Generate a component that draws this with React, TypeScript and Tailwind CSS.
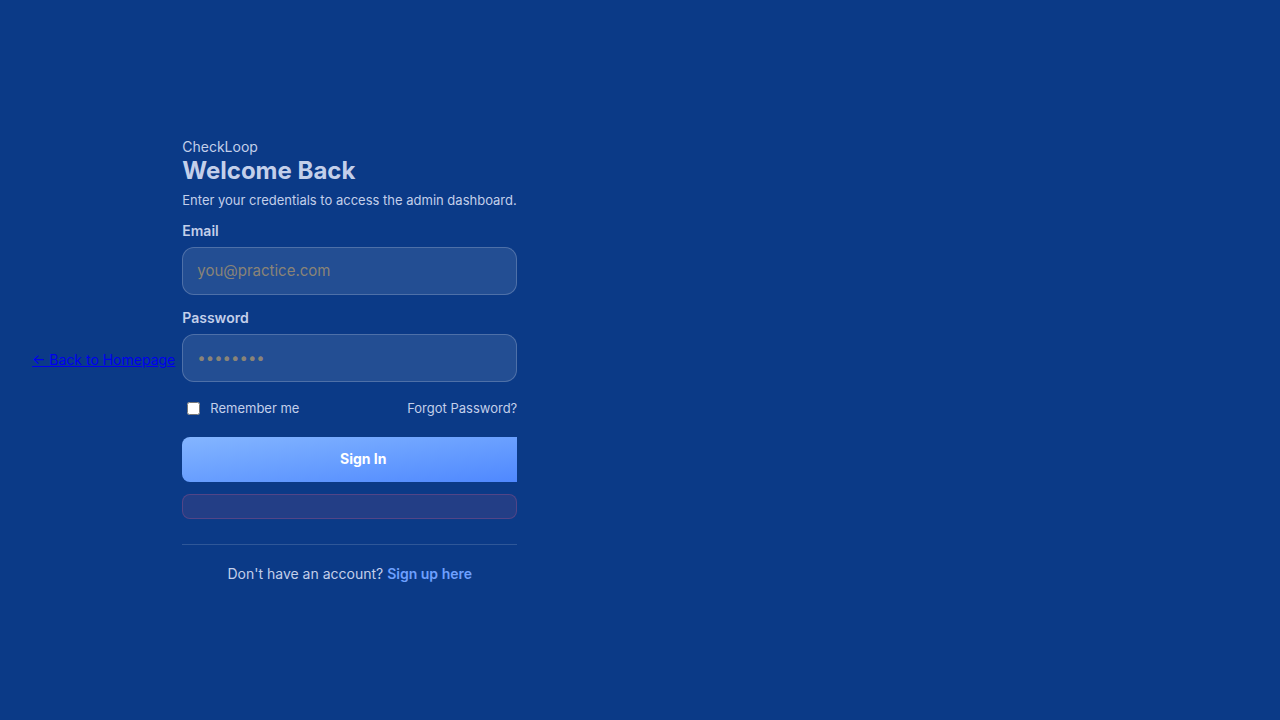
import React from "react";

const LoginPage = () => {
  return (
    <div
      className="min-h-screen w-full flex items-center gap-[7px] px-8 bg-[#0b3a87]"
      style={{ fontFamily: "Inter, 'Liberation Sans', sans-serif" }}
    >
      <a href="#" className="text-sm text-[#0000ee] underline">
        ← Back to Homepage
      </a>
      <div className="w-[335px] flex flex-col">
        <p className="text-sm text-[#c3cfea] leading-5">CheckLoop</p>
        <h1 className="text-2xl font-bold text-[#c3cfea] leading-7">Welcome Back</h1>
        <p className="text-[13px] leading-4 text-[#c3cfea] mt-[7px]">
          Enter your credentials to access the admin dashboard.
        </p>
        <form className="flex flex-col">
          <label className="mt-[15px] text-sm leading-4 font-semibold text-[#c3cfea]">
            Email
          </label>
          <input
            type="email"
            placeholder="you@practice.com"
            className="mt-2 h-12 rounded-xl border border-white/20 bg-white/10 px-[14px] text-[15px] placeholder:text-[#8a8477] outline-none"
          />
          <label className="mt-[15px] text-sm leading-4 font-semibold text-[#c3cfea]">
            Password
          </label>
          <input
            type="password"
            placeholder="••••••••"
            className="mt-2 h-12 rounded-xl border border-white/20 bg-white/10 px-[14px] text-[15px] placeholder:text-[#8a8477] outline-none"
          />
          <div className="flex justify-between items-center h-5 mt-[17px]">
            <label className="flex items-center gap-2.5 text-[13px] text-[#c3cfea]">
              <input type="checkbox" className="ml-[5px] w-[13px] h-[13px]" />
              Remember me
            </label>
            <a href="#" className="text-[13px] text-[#c3cfea]">
              Forgot Password?
            </a>
          </div>
          <div className="overflow-hidden mt-[18px]">
            <button
              type="button"
              className="w-[362px] h-[45px] rounded-lg bg-gradient-to-br from-[#84b5ff] to-[#4d86ff] text-white text-sm font-bold"
            >
              Sign In
            </button>
          </div>
          <div className="mt-3 h-[25px] rounded-lg border border-[#e05a8a]/25 bg-[#233e86]" />
        </form>
        <div className="mt-[25px] border-t border-white/15" />
        <p className="mt-[19px] text-sm leading-5 text-center text-[#c3cfea]">
          Don't have an account?{" "}
          <a href="#" className="font-semibold text-[#6ea0ff]">
            Sign up here
          </a>
        </p>
      </div>
    </div>
  );
};

export default function App() {
  return <LoginPage />;
}
